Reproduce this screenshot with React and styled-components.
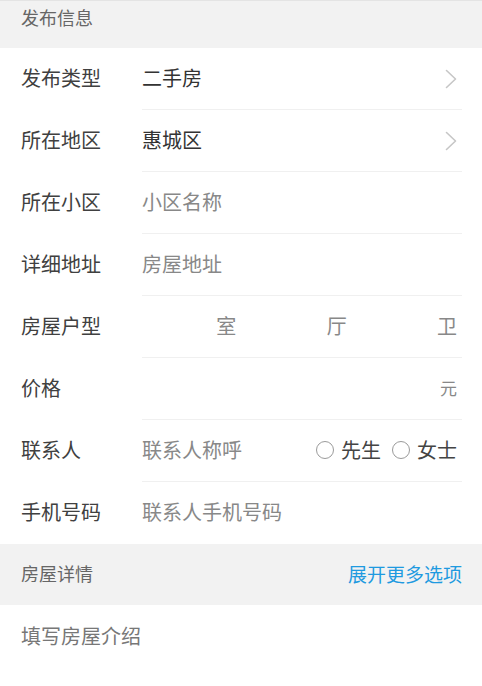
import React from 'react';
import styled, { createGlobalStyle } from 'styled-components';

const GlobalStyle = createGlobalStyle`
  html, body {
    margin: 0;
    padding: 0;
    background: #fff;
  }
  body {
    font-family: 'Noto Sans CJK SC', 'Noto Sans', sans-serif;
    -webkit-font-smoothing: antialiased;
  }
  * { box-sizing: border-box; }
`;

const Page = styled.main`
  width: 482px;
  min-height: 686px;
  background: #fff;
  border-top: 1px solid #e4e4e4;
  overflow: hidden;
`;

const SectionBar = styled.div`
  display: flex;
  align-items: center;
  justify-content: space-between;
  height: ${(p) => (p.top ? '47px' : '61px')};
  padding: ${(p) => (p.top ? '0 20px 15px 21px' : '0 20px 3px 21px')};
  background: #f2f2f2;
  font-size: 18px;
  color: #666;
`;

const MoreLink = styled.a`
  color: #1f9ae0;
  font-size: 19px;
  text-decoration: none;
  cursor: pointer;
`;

const Row = styled.div`
  display: flex;
  align-items: stretch;
  height: 62px;
  padding-left: 21px;
`;

const Label = styled.div`
  display: flex;
  align-items: center;
  width: 121px;
  flex-shrink: 0;
  padding-bottom: 3px;
  font-size: 20px;
  color: #404040;
`;

const Field = styled.div`
  flex: 1;
  min-width: 0;
  display: flex;
  align-items: center;
  margin-right: 20px;
  padding: 0 5px 3px 0;
  border-bottom: ${(p) => (p.last ? 'none' : '1px solid #f0f0f0')};
`;

const Value = styled.div`
  flex: 1;
  font-size: 20px;
  color: #333;
`;

const Input = styled.input`
  flex: 1 1 0;
  width: 0;
  min-width: 0;
  border: none;
  outline: none;
  padding: 0;
  background: transparent;
  font-family: inherit;
  font-size: 20px;
  color: #333;
  &::placeholder {
    color: #888;
  }
`;

const Unit = styled.span`
  font-size: ${(p) => (p.small ? '17px' : '20px')};
  color: #888;
  flex-shrink: 0;
`;

const Split = styled.div`
  flex: 1;
  display: flex;
  gap: 16px;
`;

const SplitCell = styled.div`
  flex: 1 1 0;
  min-width: 0;
  display: flex;
  align-items: center;
`;

const RadioGroup = styled.div`
  display: flex;
  align-items: center;
  gap: 11px;
  flex-shrink: 0;
`;

const RadioLabel = styled.label`
  display: flex;
  align-items: center;
  gap: 7px;
  font-size: 20px;
  color: #444;
  cursor: pointer;
`;

const Circle = styled.span`
  display: inline-block;
  width: 18px;
  height: 18px;
  margin-top: 2px;
  border: 1px solid #9a9a9a;
  border-radius: 50%;
`;

const Intro = styled.textarea`
  display: block;
  width: 100%;
  height: 82px;
  border: none;
  outline: none;
  resize: none;
  padding: 18px 21px 0;
  font-family: inherit;
  font-size: 20px;
  line-height: 26px;
  color: #333;
  &::placeholder {
    color: #777;
  }
`;

const Chevron = () => (
  <svg width="12" height="20" viewBox="0 0 12 20" fill="none" style={{ marginTop: 3 }}>
    <polyline points="1.5,1.5 10.5,10 1.5,18.5" stroke="#c6c6c6" strokeWidth="1.6" strokeLinecap="round" strokeLinejoin="round" />
  </svg>
);

const App = () => (
  <>
    <GlobalStyle />
    <Page>
      <SectionBar top>发布信息</SectionBar>

      <Row>
        <Label>发布类型</Label>
        <Field>
          <Value>二手房</Value>
          <Chevron />
        </Field>
      </Row>

      <Row>
        <Label>所在地区</Label>
        <Field>
          <Value>惠城区</Value>
          <Chevron />
        </Field>
      </Row>

      <Row>
        <Label>所在小区</Label>
        <Field>
          <Input placeholder="小区名称" />
        </Field>
      </Row>

      <Row>
        <Label>详细地址</Label>
        <Field>
          <Input placeholder="房屋地址" />
        </Field>
      </Row>

      <Row>
        <Label>房屋户型</Label>
        <Field>
          <Split>
            {['室', '厅', '卫'].map((u) => (
              <SplitCell key={u}>
                <Input />
                <Unit>{u}</Unit>
              </SplitCell>
            ))}
          </Split>
        </Field>
      </Row>

      <Row>
        <Label>价格</Label>
        <Field>
          <Input />
          <Unit small>元</Unit>
        </Field>
      </Row>

      <Row>
        <Label>联系人</Label>
        <Field>
          <Input placeholder="联系人称呼" />
          <RadioGroup>
            <RadioLabel><Circle />先生</RadioLabel>
            <RadioLabel><Circle />女士</RadioLabel>
          </RadioGroup>
        </Field>
      </Row>

      <Row>
        <Label>手机号码</Label>
        <Field last>
          <Input placeholder="联系人手机号码" />
        </Field>
      </Row>

      <SectionBar>
        房屋详情
        <MoreLink>展开更多选项</MoreLink>
      </SectionBar>

      <Intro placeholder="填写房屋介绍" />
    </Page>
  </>
);

export default App;
